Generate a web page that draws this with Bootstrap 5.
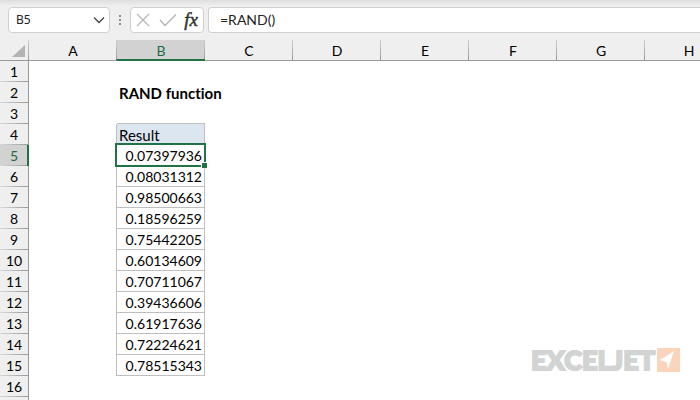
<!DOCTYPE html>
<html lang="en">
<head>
<meta charset="utf-8">
<meta name="viewport" content="width=device-width, initial-scale=1">
<title>RAND function</title>
<link rel="stylesheet" href="https://cdn.jsdelivr.net/npm/bootstrap@5.3.0/dist/css/bootstrap.min.css">
<style>
body { font-family: Lato, Carlito, sans-serif; font-size: 14px; line-height: 20px; font-variant-ligatures: none; color: #000; background: #fff; }
.formula-bar { height: 40px; padding: 7px 0 7px 8px; background: linear-gradient(#dedede, #efefef 6px); }
.bar-box { height: 26px; border: 1px solid #d0d0d0; border-radius: 4px; background: #fff; }
.bar-box input { outline: 0; color: #222; background: transparent; min-width: 0; }
.name-box { width: 102px; padding: 0 4px 0 7px; }
.name-box input { font-family: "Noto Sans", sans-serif; font-size: 12px; }
.tool-box { width: 74px; padding: 0 5px 0 3px; }
.fx-button { font: italic 400 19px/22px "Liberation Serif", serif; color: #333; -webkit-text-stroke: 0.5px #333; }
.formula-box { padding-left: 11px; border-right: 0; border-radius: 4px 0 0 4px; }
.grip { width: 20px; }
.sheet { table-layout: fixed; width: 733px; border-collapse: separate; border-spacing: 0; }
.sheet th, .sheet td { height: 21px; padding: 1px 2px 0; border: 0 solid #bfbfbf; font-weight: 400; white-space: nowrap; line-height: 18px; }
.rows { width: 29px; }
.sheet thead th { text-align: center; border-bottom: 1px solid #999; background: linear-gradient(#d0d0d0, #999) right / 1px 100% no-repeat #efefef; }
.sheet thead th.col-active { color: #1e6b45; position: relative; background-color: #d2d2d2; border-color: #217346; }
.col-active::after { content: ""; position: absolute; left: -1px; right: 0; bottom: 0; height: 1px; background: #217346; }
.sheet tbody th { text-align: center; padding: 1px 0 0; border-right: 1px solid #999; background: linear-gradient(90deg, #d8d8d8, #999) bottom / 100% 1px no-repeat #efefef; }
.sheet tbody th.row-active { color: #1e6b45; background-color: #d2d2d2; box-shadow: inset -1px 0 #217346; border-right-color: #217346; }
.sheet td.edge-right { border-right-width: 1px; }
.sheet td.edge-bottom { border-bottom-width: 1px; }
.sheet td.title { font-size: 15px; font-weight: 700; }
.sheet td.result { text-align: right; border-width: 0 1px 1px 0; }
.sheet td.heading { border-width: 0 1px 1px 0; background: #dce6f1; font-size: 15px; }
.selection { position: absolute; inset: -2px; border: 2px solid #217346; pointer-events: none; }
.selection::after { content: ""; position: absolute; right: -3px; bottom: -3px; width: 6px; height: 6px; background: #217346; border: solid #fff; border-width: 1px 0 0 1px; }
.brand { position: absolute; right: 20px; bottom: 28px; gap: 2px; color: #d1d4d3; }
.brand-name { font: 900 27px/24px Lato, sans-serif; -webkit-text-stroke: 2px #d1d4d3; }
</style>
<script src="https://cdn.jsdelivr.net/npm/bootstrap@5.3.0/dist/js/bootstrap.bundle.min.js"></script>
</head>
<body>
<div class="position-relative vh-100 overflow-hidden">
  <header class="formula-bar d-flex">
    <div class="bar-box name-box d-flex align-items-center flex-shrink-0">
      <input class="border-0 p-0 flex-grow-1" type="text" value="B5" aria-label="Name box">
      <button class="btn p-0 border-0 d-flex" type="button" aria-label="Show names"><svg width="12" height="10" viewBox="0 0 12 10" fill="none" stroke="#444" stroke-width="1.3"><path d="M1 2.5l5 5 5-5"/></svg></button>
    </div>
    <div class="grip d-flex align-items-center justify-content-center flex-shrink-0">
      <svg width="2" height="12" fill="#8a8a8a"><path d="M0 1h2v2H0zM0 5h2v2H0zM0 9h2v2H0z"/></svg>
    </div>
    <div class="bar-box tool-box d-flex align-items-center justify-content-between flex-shrink-0">
      <button class="btn p-0 border-0 d-flex" type="button" aria-label="Cancel"><svg width="18" height="18" viewBox="0 0 18 18" fill="none" stroke="#b5b5b5" stroke-width="1.2"><path d="M3 3l12 12M15 3L3 15"/></svg></button>
      <button class="btn p-0 border-0 d-flex" type="button" aria-label="Enter"><svg width="20" height="18" viewBox="0 0 20 18" fill="none" stroke="#b5b5b5" stroke-width="1.3"><path d="M2 9l5 5.500L18 3.500"/></svg></button>
      <button class="btn p-0 border-0 fx-button" type="button" aria-label="Insert function">fx</button>
    </div>
    <div class="bar-box formula-box d-flex align-items-center flex-grow-1 ms-1">
      <input class="border-0 p-0 flex-grow-1" type="text" value="=RAND()" aria-label="Formula">
    </div>
  </header>
  <table class="sheet">
    <colgroup><col class="rows"><col span="8"></colgroup>
    <thead>
      <tr><th aria-label="Select all"><svg class="d-block ms-auto me-0" width="15" height="14" viewBox="0 0 15 14"><path d="M13 1v12H0z" fill="#b3b3b3"/></svg></th><th scope="col">A</th><th scope="col" class="col-active">B</th><th scope="col">C</th><th scope="col">D</th><th scope="col">E</th><th scope="col">F</th><th scope="col">G</th><th scope="col">H</th></tr>
    </thead>
    <tbody>
      <tr><th scope="row">1</th><td></td><td></td><td colspan="6"></td></tr>
      <tr><th scope="row">2</th><td></td><td class="title">RAND function</td><td colspan="6"></td></tr>
      <tr><th scope="row">3</th><td></td><td class="edge-bottom"></td><td colspan="6"></td></tr>
      <tr><th scope="row">4</th><td class="edge-right"></td><td class="heading">Result</td><td colspan="6"></td></tr>
      <tr><th scope="row" class="row-active">5</th><td class="edge-right"></td><td class="result position-relative">0.07397936<span class="selection"></span></td><td colspan="6"></td></tr>
      <tr><th scope="row">6</th><td class="edge-right"></td><td class="result">0.08031312</td><td colspan="6"></td></tr>
      <tr><th scope="row">7</th><td class="edge-right"></td><td class="result">0.98500663</td><td colspan="6"></td></tr>
      <tr><th scope="row">8</th><td class="edge-right"></td><td class="result">0.18596259</td><td colspan="6"></td></tr>
      <tr><th scope="row">9</th><td class="edge-right"></td><td class="result">0.75442205</td><td colspan="6"></td></tr>
      <tr><th scope="row">10</th><td class="edge-right"></td><td class="result">0.60134609</td><td colspan="6"></td></tr>
      <tr><th scope="row">11</th><td class="edge-right"></td><td class="result">0.70711067</td><td colspan="6"></td></tr>
      <tr><th scope="row">12</th><td class="edge-right"></td><td class="result">0.39436606</td><td colspan="6"></td></tr>
      <tr><th scope="row">13</th><td class="edge-right"></td><td class="result">0.61917636</td><td colspan="6"></td></tr>
      <tr><th scope="row">14</th><td class="edge-right"></td><td class="result">0.72224621</td><td colspan="6"></td></tr>
      <tr><th scope="row">15</th><td class="edge-right"></td><td class="result">0.78515343</td><td colspan="6"></td></tr>
      <tr><th scope="row">16</th><td></td><td></td><td colspan="6"></td></tr>
      <tr><th></th><td></td><td></td><td colspan="6"></td></tr>
    </tbody>
  </table>
  <div class="brand d-flex align-items-center">
    <span class="brand-name">EXCELJET</span>
    <svg width="23" height="24" viewBox="0 0 23 24"><path d="M0 0h23v24H0z" fill="#fad5bb"/><path d="M17 3L3 12l6.500 2L11 21z" fill="#fff"/></svg>
  </div>
</div>
</body>
</html>
